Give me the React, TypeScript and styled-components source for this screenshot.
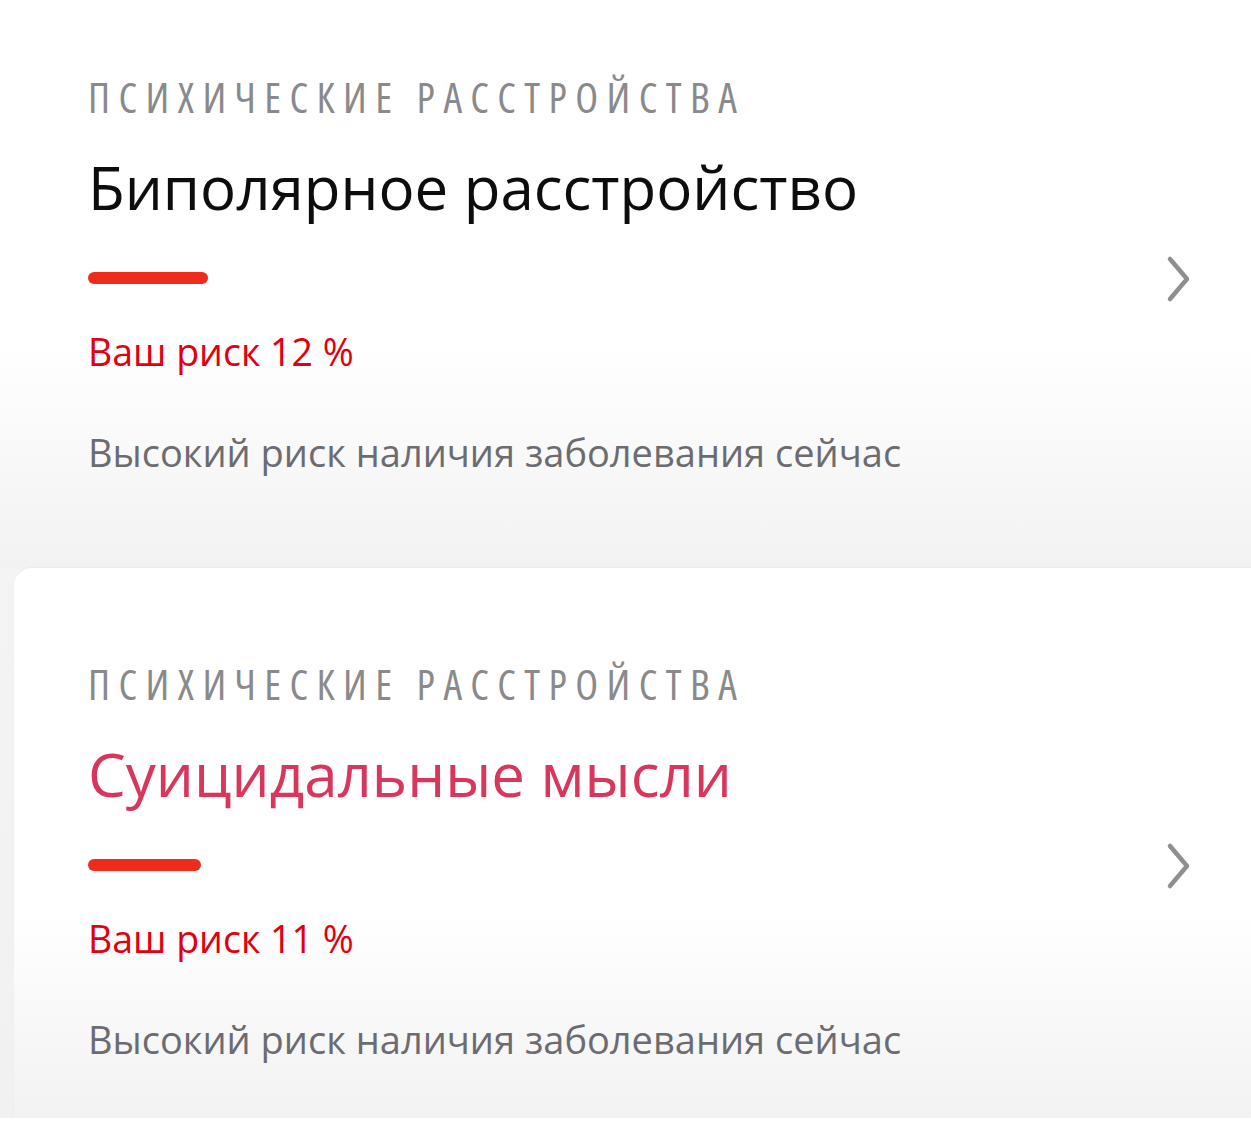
import React from "react";
import styled, { createGlobalStyle } from "styled-components";

const Global = createGlobalStyle`
  html, body { margin: 0; padding: 0; background: #ffffff; }
  body { font-family: "Open Sans", "Liberation Sans", sans-serif; overflow: hidden; }
`;

const Page = styled.div`
  width: 1251px;
  height: 1139px;
  overflow: hidden;
  background: #ffffff;
`;

const Deck = styled.div`
  display: flex;
  flex-direction: column;
  margin-top: -19px;
  background: linear-gradient(180deg, #f7f7f7 0%, #f1f1f1 100%);
`;

const Card = styled.div<{ $inset: number; $height: number }>`
  display: flex;
  align-items: flex-start;
  margin-left: ${(p) => p.$inset}px;
  height: ${(p) => p.$height}px;
  padding-left: ${(p) => 88 - p.$inset}px;
  padding-right: 58px;
  box-sizing: border-box;
  background: linear-gradient(180deg, #ffffff 0%, #ffffff 62%, #f2f2f2 100%);
  border-top-left-radius: ${(p) => (p.$inset ? 18 : 0)}px;
  box-shadow: ${(p) => (p.$inset ? "0 -1px 2px rgba(0,0,0,0.04)" : "none")};
`;

const Body = styled.div`
  flex: 1;
  display: flex;
  flex-direction: column;
  align-items: flex-start;
  padding-top: 95px;
`;

const Category = styled.div`
  font-size: 42px;
  line-height: 1;
  font-stretch: 75%;
  letter-spacing: 8.4px;
  color: #8a8a8c;
  white-space: nowrap;
`;

const Title = styled.div<{ $alert?: boolean }>`
  margin-top: 39px;
  font-size: 60px;
  line-height: 1;
  font-stretch: 88%;
  color: ${(p) => (p.$alert ? "#d9365b" : "#0d0d0d")};
  white-space: nowrap;
`;

const Bar = styled.div`
  margin-top: 55px;
  height: 12px;
  border-radius: 6px;
  background: #ef2b1c;
`;

const Risk = styled.div`
  margin-top: 49px;
  font-size: 37.5px;
  line-height: 1;
  color: #e1000f;
  white-space: nowrap;
`;

const Note = styled.div`
  margin-top: 62px;
  font-size: 38px;
  line-height: 1;
  color: #6c6c70;
  white-space: nowrap;
`;

const Chevron = styled.svg`
  flex: none;
  margin-top: 274px;
  width: 28px;
  height: 48px;
`;

const items = [
  {
    title: "Биполярное расстройство",
    risk: 12,
    bar: 120,
    alert: false,
    inset: 0,
    height: 587,
  },
  {
    title: "Суицидальные мысли",
    risk: 11,
    bar: 113,
    alert: true,
    inset: 14,
    height: 550,
  },
];

export default function App() {
  return (
    <Page>
      <Global />
      <Deck>
        {items.map((it) => (
          <Card key={it.title} $inset={it.inset} $height={it.height}>
            <Body>
              <Category>ПСИХИЧЕСКИЕ РАССТРОЙСТВА</Category>
              <Title $alert={it.alert}>{it.title}</Title>
              <Bar style={{ width: it.bar }} />
              <Risk>Ваш риск {it.risk} %</Risk>
              <Note>Высокий риск наличия заболевания сейчас</Note>
            </Body>
            <Chevron viewBox="0 0 28 48">
              <polyline
                points="5,4 22,24 5,44"
                fill="none"
                stroke="#8f8f8f"
                strokeWidth="4.5"
                strokeLinecap="round"
                strokeLinejoin="round"
              />
            </Chevron>
          </Card>
        ))}
      </Deck>
    </Page>
  );
}
